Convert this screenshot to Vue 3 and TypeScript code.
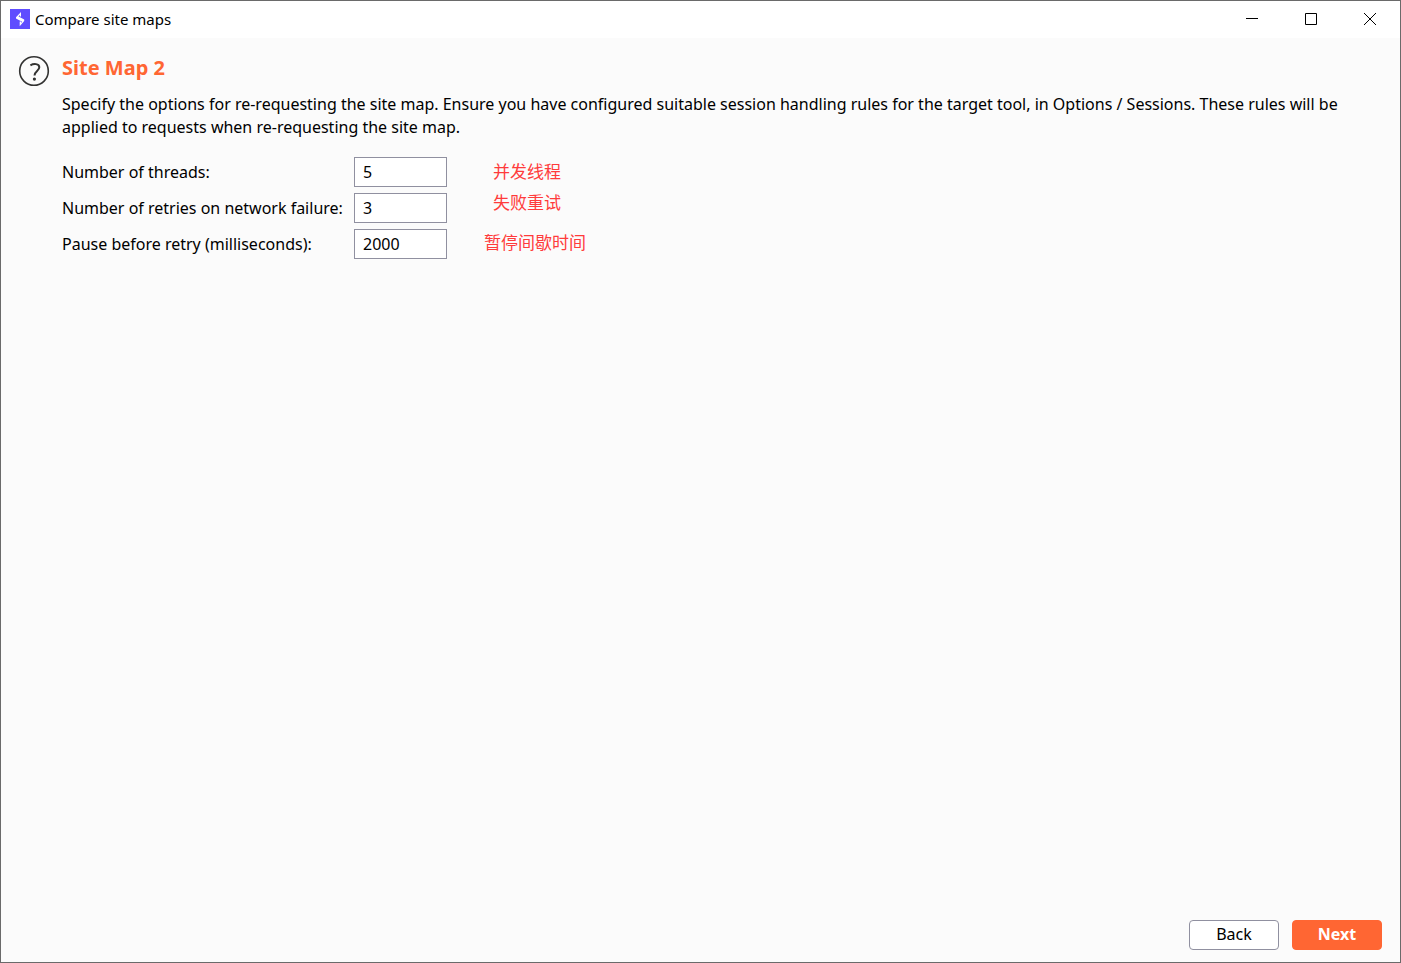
<script setup lang="ts">
import { reactive } from 'vue'

interface Field {
  id: string
  label: string
  value: string
}

const fields = reactive<Field[]>([
  { id: 'threads', label: 'Number of threads:', value: '5' },
  { id: 'retries', label: 'Number of retries on network failure:', value: '3' },
  { id: 'pause', label: 'Pause before retry (milliseconds):', value: '2000' },
])
</script>

<template>
  <div class="window">
    <header class="titlebar">
      <svg class="logo" viewBox="0 0 20 20" aria-hidden="true">
        <rect width="20" height="20" fill="#5f4dff" />
        <path d="M11 3V7.6H8.6L14.2 10.6V12L9.7 17.2V12.4H11.6L6 9.4V8.2Z M9.8 5.9L8.4 7.6H9.8Z M11 12.4V13.9L12.2 12.4Z" fill="#fff" fill-rule="evenodd" />
      </svg>
      <span class="caption">Compare site maps</span>
      <button class="control" type="button" aria-label="Minimize">
        <svg viewBox="0 0 12 12"><path d="M0 5.5H12" /></svg>
      </button>
      <button class="control" type="button" aria-label="Maximize">
        <svg viewBox="0 0 12 12"><path d="M.5 .5H11.5V11.5H.5Z" /></svg>
      </button>
      <button class="control" type="button" aria-label="Close">
        <svg viewBox="0 0 12 12"><path d="M0 0L12 12M12 0L0 12" /></svg>
      </button>
    </header>

    <main class="content">
      <button class="help" type="button" aria-label="Help">
        <svg viewBox="0 0 32 32">
          <circle cx="16" cy="16" r="14.3" fill="none" stroke="#333332" stroke-width="1.6" />
          <path d="M12.4 10.3C15.6 8.4 21.3 8.4 21.3 12.3C21.3 16 16.5 16 16.5 20.6" fill="none" stroke="#333332" stroke-width="2" />
          <circle cx="16.4" cy="24.1" r="1.6" fill="#333332" />
        </svg>
      </button>
      <section class="panel">
        <h1>Site Map 2</h1>
        <p>
          Specify the options for re-requesting the site map. Ensure you have configured suitable session handling rules
          for the target tool, in Options / Sessions. These rules will be applied to requests when re-requesting the site map.
        </p>
        <div class="settings">
          <form class="fields" @submit.prevent>
            <div v-for="field in fields" :key="field.id" class="field">
              <label :for="field.id">{{ field.label }}</label>
              <input :id="field.id" v-model="field.value" type="text" />
            </div>
          </form>
          <aside class="notes" lang="zh-CN">
            <span class="note">并发线程</span>
            <span class="note">失败重试</span>
            <span class="note wide">暂停间歇时间</span>
          </aside>
        </div>
      </section>
    </main>

    <footer class="actions">
      <button class="action" type="button">Back</button>
      <button class="action primary" type="button">Next</button>
    </footer>
  </div>
</template>

<style>
body {
  background: #fbfbfb;
}
</style>

<style scoped>
.window {
  box-sizing: border-box;
  min-height: 100vh;
  display: flex;
  flex-direction: column;
  border: 1px solid #6a6a6a;
  background: #fbfbfb;
  color: #000;
  font: 16px/23px "Noto Sans", "Noto Sans CJK SC", sans-serif;
}
button {
  font: inherit;
  color: inherit;
}
.titlebar {
  box-sizing: border-box;
  display: flex;
  align-items: center;
  height: 37px;
  padding: 0 1px 1px 9px;
  background: #fff;
}
.logo {
  width: 20px;
  height: 20px;
}
.caption {
  flex: 1;
  padding-left: 5px;
  font-size: 15px;
}
.control {
  display: flex;
  align-items: center;
  justify-content: center;
  width: 59px;
  height: 36px;
  padding: 0;
  border: 0;
  background: none;
}
.control svg {
  width: 12px;
  height: 12px;
  fill: none;
  stroke: #000;
  stroke-width: 1;
}
.content {
  flex: 1;
  display: flex;
  align-items: flex-start;
  gap: 12px;
  padding: 17px 30px 0 17px;
}
.help {
  flex: none;
  width: 32px;
  height: 32px;
  padding: 0;
  border: 0;
  background: none;
}
.help svg {
  display: block;
}
.panel {
  flex: 1;
}
h1 {
  margin: 0;
  color: #ff6633;
  font-size: 20px;
  line-height: 26px;
}
p {
  margin: 12px 0 18px;
}
.settings {
  display: flex;
  align-items: flex-start;
  gap: 37px;
}
.fields {
  display: flex;
  flex-direction: column;
  gap: 6px;
}
.field {
  display: grid;
  grid-template-columns: 286px 93px;
  column-gap: 6px;
  align-items: center;
  white-space: nowrap;
}
input {
  box-sizing: border-box;
  width: 100%;
  height: 30px;
  padding: 0 8px;
  border: 1px solid #9090a0;
  outline: 0;
  background: #fff;
  color: #000;
  font: inherit;
}
.notes {
  display: flex;
  flex-direction: column;
  padding-top: 2px;
  color: #ff3b3b;
  font-family: "Noto Sans CJK SC", sans-serif;
  font-size: 17px;
}
.note {
  margin: 0 0 8px 9px;
}
.note.wide {
  margin: 9px 0 0;
}
.actions {
  display: flex;
  justify-content: flex-end;
  gap: 13px;
  padding: 0 18px 12px;
}
.action {
  box-sizing: border-box;
  width: 90px;
  height: 30px;
  padding: 0 0 2px;
  border: 1px solid #9090a0;
  border-radius: 4px;
  background: #fff;
}
.action.primary {
  border-color: #ff6633;
  background: #ff6633;
  color: #fff;
  font-weight: 700;
}
</style>
